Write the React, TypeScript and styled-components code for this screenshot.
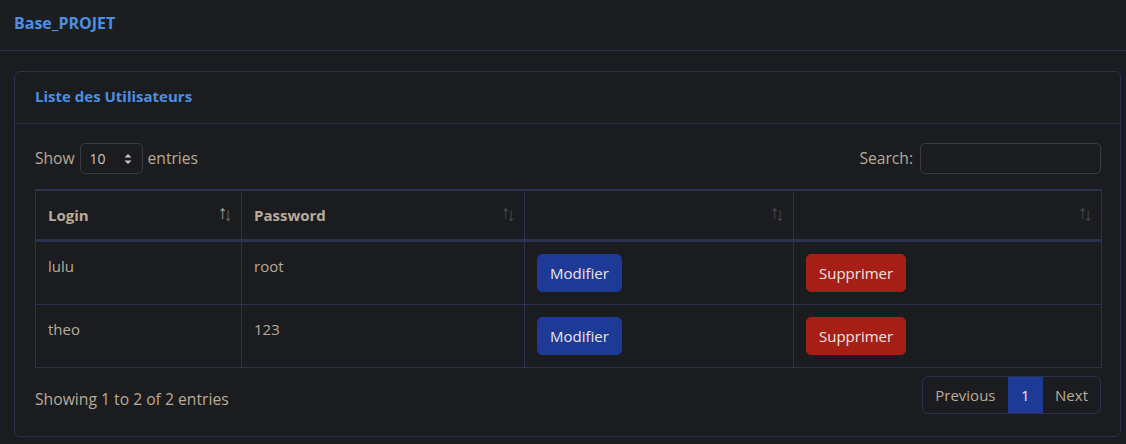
import React from "react";
import styled, { createGlobalStyle } from "styled-components";

const GlobalStyle = createGlobalStyle`
  html, body {
    margin: 0;
    padding: 0;
    background: #1b1c1f;
    font-family: "Open Sans", "Noto Sans", sans-serif;
    color: #b9ab98;
  }
  * { box-sizing: border-box; }
`;

const users = [
  { login: "lulu", password: "root" },
  { login: "theo", password: "123" },
];

const columns = [
  { label: "Login", width: 206, active: true },
  { label: "Password", width: 283 },
  { label: "", width: 269 },
  { label: "", width: 308 },
];

const SortIcon = ({ active }: { active?: boolean }) => (
  <SortWrap $active={active}>
    <span>↑</span>
    <span>↓</span>
  </SortWrap>
);

export default function App() {
  return (
    <>
      <GlobalStyle />
      <Navbar>
        <Brand>Base_PROJET</Brand>
      </Navbar>
      <Main>
        <Card>
          <CardHeader>
            <span>Liste des Utilisateurs</span>
          </CardHeader>
          <CardBody>
            <TopBar>
              <Label>
                Show
                <Select>
                  <span>10</span>
                  <Caret viewBox="0 0 10 14">
                    <path d="M1.5 5.5 L5 2 L8.5 5.5 Z" fill="#c9c6c0" />
                    <path d="M1.5 8.5 L5 12 L8.5 8.5 Z" fill="#c9c6c0" />
                  </Caret>
                </Select>
                entries
              </Label>
              <Label>
                Search:
                <SearchInput type="text" />
              </Label>
            </TopBar>

            <Table>
              <colgroup>
                {columns.map((c, i) => (
                  <col key={i} style={{ width: c.width }} />
                ))}
              </colgroup>
              <thead>
                <tr>
                  {columns.map((c, i) => (
                    <Th key={i}>
                      {c.label}
                      <SortIcon active={c.active} />
                    </Th>
                  ))}
                </tr>
              </thead>
              <tbody>
                {users.map((u) => (
                  <tr key={u.login}>
                    <Td>{u.login}</Td>
                    <Td>{u.password}</Td>
                    <Td>
                      <Button $variant="primary">Modifier</Button>
                    </Td>
                    <Td>
                      <Button $variant="danger">Supprimer</Button>
                    </Td>
                  </tr>
                ))}
              </tbody>
            </Table>

            <BottomBar>
              <Info>Showing 1 to 2 of 2 entries</Info>
              <Pagination>
                <PageItem>Previous</PageItem>
                <PageItem $active>1</PageItem>
                <PageItem>Next</PageItem>
              </Pagination>
            </BottomBar>
          </CardBody>
        </Card>
      </Main>
    </>
  );
}

const Navbar = styled.nav`
  height: 51px;
  display: flex;
  align-items: center;
  padding: 0 14px;
  border-bottom: 1px solid #2a3250;
  background: #1c1d20;
`;

const Brand = styled.span`
  color: #4d8fe4;
  font-weight: 700;
  font-size: 16px;
  margin-top: -4px;
`;

const Main = styled.main`
  padding: 20px 5px 0 14px;
`;

const Card = styled.section`
  border: 1px solid #2a3250;
  border-radius: 6px;
  background: #1b1c1f;
`;

const CardHeader = styled.header`
  height: 52px;
  display: flex;
  align-items: center;
  padding: 0 20px;
  border-bottom: 1px solid #2a3250;
  color: #4d8fe4;
  font-weight: 700;
  font-size: 15px;

  span {
    margin-top: -4px;
  }
`;

const CardBody = styled.div`
  padding: 19px 19px 22px 20px;
`;

const TopBar = styled.div`
  display: flex;
  justify-content: space-between;
  align-items: center;
  height: 31px;
  margin-bottom: 15px;
`;

const Label = styled.label`
  display: flex;
  align-items: center;
  gap: 5px;
  font-size: 15.6px;
  color: #b9ab98;
  margin-top: -2px;
`;

const Select = styled.div`
  width: 63px;
  height: 31px;
  border: 1px solid #3a3b3f;
  border-radius: 5px;
  display: flex;
  align-items: center;
  justify-content: space-between;
  padding: 0 9px 0 9px;
  margin-top: 2px;
  font-size: 14px;
  color: #c9c6c0;
`;

const Caret = styled.svg`
  width: 10px;
  height: 14px;
`;

const SearchInput = styled.input`
  width: 181px;
  height: 31px;
  border: 1px solid #3a3b3f;
  border-radius: 5px;
  background: transparent;
  margin-left: 2px;
  margin-top: 2px;
`;

const Table = styled.table`
  width: 1067px;
  border-collapse: collapse;
  table-layout: fixed;
  border: 1px solid #2a3250;
  font-size: 15px;
`;

const Th = styled.th`
  position: relative;
  height: 50px;
  text-align: left;
  padding: 0 12px;
  font-weight: 700;
  color: #b9ab98;
  border-top: 2px solid #2a3250;
  border-right: 1px solid #2a3250;
  border-bottom: 3px solid #2a3250;
`;

const SortWrap = styled.span<{ $active?: boolean }>`
  position: absolute;
  right: 8px;
  top: 10px;
  display: flex;
  font-size: 19px;
  font-weight: 400;
  letter-spacing: -4px;
  span:first-child {
    color: ${({ $active }) => ($active ? "#a3a19d" : "#4a4a4c")};
    margin-top: -2px;
  }
  span:last-child {
    color: ${({ $active }) => ($active ? "#6e6d6b" : "#4a4a4c")};
    padding-right: 4px;
  }
`;

const Td = styled.td`
  vertical-align: top;
  padding: 12px 12px;
  line-height: 24px;
  height: 63px;
  color: #b9ab98;
  border-right: 1px solid #2a3250;
  border-bottom: 1px solid #2a3250;
`;

const Button = styled.button<{ $variant: "primary" | "danger" }>`
  height: 38px;
  padding: 0 12px;
  border-radius: 5px;
  border: 1px solid
    ${({ $variant }) => ($variant === "primary" ? "#1c3a96" : "#a61f16")};
  background: ${({ $variant }) =>
    $variant === "primary" ? "#1c3a96" : "#a61f16"};
  color: #ece6e2;
  font-family: inherit;
  font-size: 15px;
  cursor: pointer;
`;

const BottomBar = styled.div`
  display: flex;
  justify-content: space-between;
  align-items: center;
  margin-top: 8px;
`;

const Info = styled.div`
  font-size: 15.7px;
  color: #b9ab98;
  padding-top: 9px;
`;

const Pagination = styled.ul`
  display: flex;
  margin: 0;
  padding: 0;
  list-style: none;
  border: 1px solid #2a3250;
  border-radius: 6px;
  overflow: hidden;
  height: 38px;
`;

const PageItem = styled.li<{ $active?: boolean }>`
  display: flex;
  align-items: center;
  padding: 0 ${({ $active }) => ($active ? "13.5px" : "12px")};
  font-size: 15px;
  color: ${({ $active }) => ($active ? "#ece6e2" : "#b9ab98")};
  background: ${({ $active }) => ($active ? "#1c3a96" : "transparent")};
`;
